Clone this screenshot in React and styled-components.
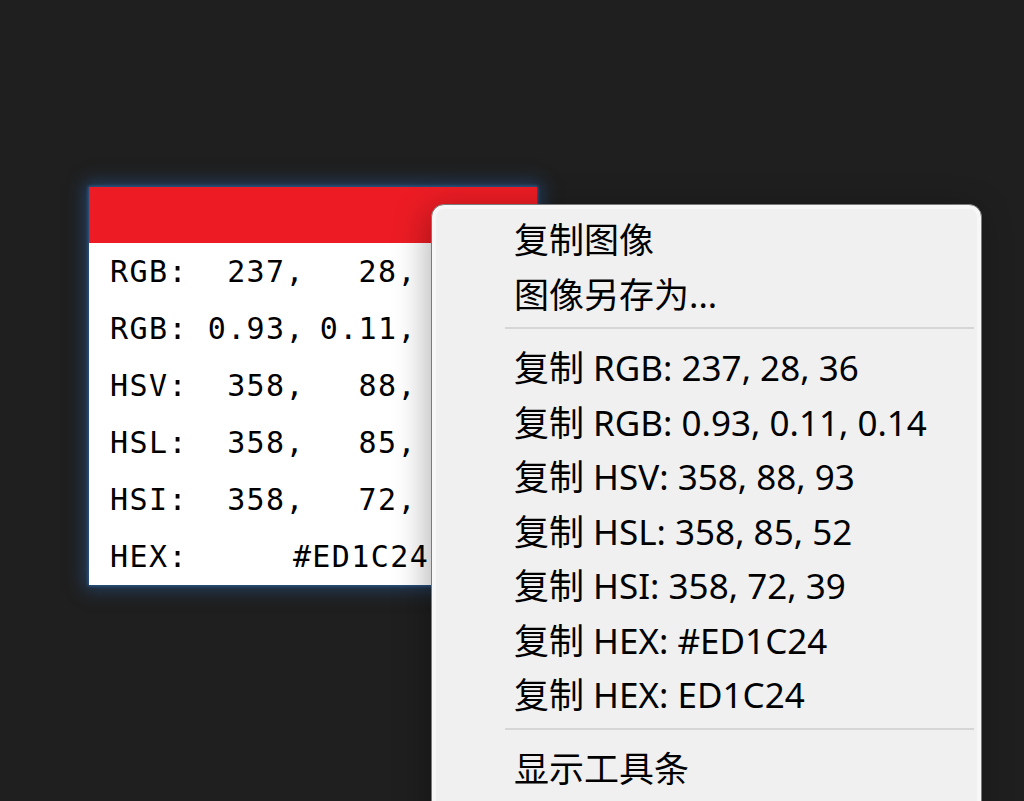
import React from 'react'
import styled, { createGlobalStyle } from 'styled-components'

const GlobalStyle = createGlobalStyle`
  html, body {
    margin: 0;
    padding: 0;
    background: #1f1f1f;
    overflow: hidden;
  }
  #root {
    width: 1024px;
    height: 801px;
    overflow: hidden;
  }
`

const rows = [
  { label: 'RGB:', values: ['237,', '28,', '36'] },
  { label: 'RGB:', values: ['0.93,', '0.11,', '0.14'] },
  { label: 'HSV:', values: ['358,', '88,', '93'] },
  { label: 'HSL:', values: ['358,', '85,', '52'] },
  { label: 'HSI:', values: ['358,', '72,', '39'] },
]

const menuGroups = [
  ['复制图像', '图像另存为...'],
  [
    '复制 RGB: 237, 28, 36',
    '复制 RGB: 0.93, 0.11, 0.14',
    '复制 HSV: 358, 88, 93',
    '复制 HSL: 358, 85, 52',
    '复制 HSI: 358, 72, 39',
    '复制 HEX: #ED1C24',
    '复制 HEX: ED1C24',
  ],
  ['显示工具条'],
]

const App = () => {
  return (
    <>
      <GlobalStyle />
      <Screen>
        <Swatch>
          <ColorBar $color='#ED1C24' />
          <Values>
            {rows.map((r, i) => (
              <ValueRow key={i}>
                <Label>{r.label}</Label>
                {r.values.map((v, j) => (
                  <Num key={j}>{v}</Num>
                ))}
              </ValueRow>
            ))}
            <ValueRow>
              <Label>HEX:</Label>
              <Hex>#ED1C24</Hex>
            </ValueRow>
          </Values>
        </Swatch>

        <Menu>
          {menuGroups.map((group, gi) => (
            <React.Fragment key={gi}>
              {gi > 0 && <Separator />}
              {group.map((item) => (
                <MenuItem key={item}>{item}</MenuItem>
              ))}
            </React.Fragment>
          ))}
        </Menu>
      </Screen>
    </>
  )
}

const Screen = styled.div`
  position: relative;
  width: 1024px;
  height: 801px;
  padding: 187px 0 0 89px;
  box-sizing: border-box;
  overflow: hidden;
`

const Swatch = styled.div`
  width: 448px;
  background: #ffffff;
  box-shadow: 0 0 3px 1px rgba(50, 110, 175, 0.7), 0 0 16px 5px rgba(38, 88, 148, 0.55);
  display: flex;
  flex-direction: column;
`

const ColorBar = styled.div`
  height: 56px;
  background: ${(p) => p.$color};
`

const Values = styled.div`
  display: flex;
  flex-direction: column;
  padding: 0 8px 0 21px;
`

const ValueRow = styled.div`
  height: 57px;
  display: grid;
  grid-template-columns: 83px 112px 112px 112px;
  align-items: center;
  font-family: 'DejaVu Sans Mono', 'Liberation Mono', monospace;
  font-size: 30px;
  line-height: 1.2;
  letter-spacing: 1.4px;
  color: #000;
  white-space: pre;
`

const Label = styled.span`
  text-align: left;
`

const Num = styled.span`
  text-align: right;
`

const Hex = styled.span`
  grid-column: 2 / span 3;
  text-align: center;
`

const Menu = styled.div`
  position: absolute;
  left: 431px;
  top: 204px;
  width: 551px;
  height: 640px;
  box-sizing: border-box;
  padding: 8px 0;
  background: #f0f0f0;
  border: 1.5px solid #7a7a7a;
  border-radius: 13px;
  box-shadow: inset 0 0 0 4px #f7f7f7, -4px 6px 34px rgba(0, 0, 0, 0.3);
  display: flex;
  flex-direction: column;
`

const MenuItem = styled.div`
  height: 54.5px;
  flex: none;
  display: flex;
  align-items: center;
  padding-left: 82px;
  font-family: 'Noto Sans', 'Noto Sans CJK SC', sans-serif;
  font-size: 35px;
  line-height: 1.1;
  color: #000;
  white-space: nowrap;
`

const Separator = styled.div`
  height: 2px;
  flex: none;
  margin: 5px 7px 12px 73px;
  background: #d6d6d6;
`

export default App
